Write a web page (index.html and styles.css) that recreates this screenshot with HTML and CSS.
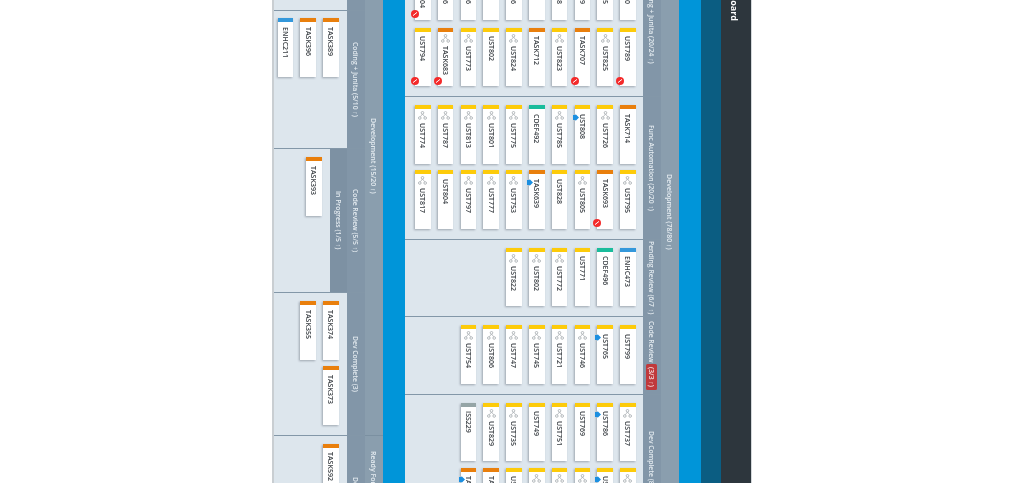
FILE: index.html
```html
<!DOCTYPE html>
<html lang="en">

<head>
    <meta charset="UTF-8">
    <title>Dashboard</title>
    <link rel="stylesheet" href="styles.css">
</head>

<body>
    <svg class="defs" width="0" height="0">
        <symbol id="share" viewBox="0 0 9 9">
            <path d="M4.5 3 2.3 5.8M4.5 3l2.2 2.8" fill="none" stroke="#a3a9ad" stroke-width=".7" />
            <circle cx="4.5" cy="1.8" r="1.3" fill="#fff" stroke="#a3a9ad" stroke-width=".8" />
            <circle cx="1.8" cy="7" r="1.3" fill="#fff" stroke="#a3a9ad" stroke-width=".8" />
            <circle cx="7.2" cy="7" r="1.3" fill="#fff" stroke="#a3a9ad" stroke-width=".8" />
        </symbol>
        <symbol id="blocked" viewBox="0 0 8 8">
            <circle cx="4" cy="4" r="4" fill="#f42a2a" />
            <path d="M2 5.6 6 2.4" stroke="#fff" stroke-width="1" />
        </symbol>
        <symbol id="pin" viewBox="0 0 6 7">
            <path d="M0 1h2.5V0L6 3.5 2.5 7V6H0z" fill="#1b8fe0" />
        </symbol>
    </svg>

    <div class="board">
        <div class="title">Dashboard</div>
        <div class="tabs"></div>

        <div class="swim">
            <div class="swim-head"></div>
            <div class="group">
                <div class="group-label">Development (78/80 ↑)</div>
                <div class="lanes">
                    <div class="lane lane-right h-76">
                        <div class="lane-label">Ready (2)</div>
                        <div class="panel"></div>
                    </div>

                    <div class="lane lane-right wide-lines">
                        <div class="lane-label">Coding + Junita (20/24 ↑)</div>
                        <div class="panel">
                            <div class="line">
                                <div class="card yellow"><svg class="share"><use href="#share" /></svg><span>UST790</span></div>
                                <div class="card yellow"><svg class="share"><use href="#share" /></svg><span>UST815</span></div>
                                <div class="card yellow"><svg class="share"><use href="#share" /></svg><span>UST819</span></div>
                                <div class="card yellow"><svg class="share"><use href="#share" /></svg><span>UST818</span></div>
                                <div class="card orange"><span>TASK710</span></div>
                                <div class="card yellow"><svg class="share"><use href="#share" /></svg><span>UST816</span></div>
                                <div class="card yellow"><span>UST812</span></div>
                                <div class="card yellow"><svg class="share"><use href="#share" /></svg><span>UST796</span></div>
                                <div class="card yellow"><svg class="share"><use href="#share" /></svg><span>UST786</span></div>
                                <div class="card orange"><svg class="share"><use href="#share" /></svg><span>TASK604</span><svg class="blocked"><use href="#blocked" /></svg></div>
                            </div>
                            <div class="line">
                                <div class="card yellow"><span>UST789</span><svg class="blocked"><use href="#blocked" /></svg></div>
                                <div class="card yellow"><svg class="share"><use href="#share" /></svg><span>UST825</span></div>
                                <div class="card orange"><span>TASK707</span><svg class="blocked"><use href="#blocked" /></svg></div>
                                <div class="card yellow"><svg class="share"><use href="#share" /></svg><span>UST823</span></div>
                                <div class="card orange"><span>TASK712</span></div>
                                <div class="card yellow"><svg class="share"><use href="#share" /></svg><span>UST824</span></div>
                                <div class="card yellow"><span>UST802</span></div>
                                <div class="card yellow"><svg class="share"><use href="#share" /></svg><span>UST773</span></div>
                                <div class="card orange"><svg class="share"><use href="#share" /></svg><span>TASK683</span><svg class="blocked"><use href="#blocked" /></svg></div>
                                <div class="card yellow"><span>UST794</span><svg class="blocked"><use href="#blocked" /></svg></div>
                            </div>
                        </div>
                    </div>

                    <div class="lane lane-right">
                        <div class="lane-label">Func Automation (20/20 ↑)</div>
                        <div class="panel">
                            <div class="line">
                                <div class="card orange"><span>TASK714</span></div>
                                <div class="card yellow"><svg class="share"><use href="#share" /></svg><span>UST726</span></div>
                                <div class="card yellow"><span>UST808</span><svg class="pin"><use href="#pin" /></svg></div>
                                <div class="card yellow"><svg class="share"><use href="#share" /></svg><span>UST785</span></div>
                                <div class="card green"><span>CDEF492</span></div>
                                <div class="card yellow"><svg class="share"><use href="#share" /></svg><span>UST775</span></div>
                                <div class="card yellow"><svg class="share"><use href="#share" /></svg><span>UST801</span></div>
                                <div class="card yellow"><svg class="share"><use href="#share" /></svg><span>UST813</span></div>
                                <div class="card yellow"><svg class="share"><use href="#share" /></svg><span>UST787</span></div>
                                <div class="card yellow"><svg class="share"><use href="#share" /></svg><span>UST774</span></div>
                            </div>
                            <div class="line">
                                <div class="card yellow"><svg class="share"><use href="#share" /></svg><span>UST795</span></div>
                                <div class="card orange"><span>TASK693</span><svg class="blocked"><use href="#blocked" /></svg></div>
                                <div class="card yellow"><svg class="share"><use href="#share" /></svg><span>UST805</span></div>
                                <div class="card yellow"><span>UST828</span></div>
                                <div class="card orange"><span>TASK639</span><svg class="pin"><use href="#pin" /></svg></div>
                                <div class="card yellow"><svg class="share"><use href="#share" /></svg><span>UST753</span></div>
                                <div class="card yellow"><svg class="share"><use href="#share" /></svg><span>UST777</span></div>
                                <div class="card yellow"><svg class="share"><use href="#share" /></svg><span>UST797</span></div>
                                <div class="card yellow"><span>UST804</span></div>
                                <div class="card yellow"><svg class="share"><use href="#share" /></svg><span>UST817</span></div>
                            </div>
                        </div>
                    </div>

                    <div class="lane lane-right">
                        <div class="lane-label">Pending Review (6/7 ↑)</div>
                        <div class="panel">
                            <div class="line">
                                <div class="card blue"><span>ENHC473</span></div>
                                <div class="card green"><span>CDEF496</span></div>
                                <div class="card yellow"><span>UST771</span></div>
                                <div class="card yellow"><svg class="share"><use href="#share" /></svg><span>UST772</span></div>
                                <div class="card yellow"><svg class="share"><use href="#share" /></svg><span>UST802</span></div>
                                <div class="card yellow"><svg class="share"><use href="#share" /></svg><span>UST822</span></div>
                            </div>
                        </div>
                    </div>

                    <div class="lane lane-right">
                        <div class="lane-label">Code Review <span class="over-limit">(3/3 ↑)</span></div>
                        <div class="panel">
                            <div class="line">
                                <div class="card yellow"><span>UST799</span></div>
                                <div class="card yellow"><span>UST765</span><svg class="pin"><use href="#pin" /></svg></div>
                                <div class="card yellow"><svg class="share"><use href="#share" /></svg><span>UST746</span></div>
                                <div class="card yellow"><svg class="share"><use href="#share" /></svg><span>UST721</span></div>
                                <div class="card yellow"><svg class="share"><use href="#share" /></svg><span>UST745</span></div>
                                <div class="card yellow"><svg class="share"><use href="#share" /></svg><span>UST747</span></div>
                                <div class="card yellow"><svg class="share"><use href="#share" /></svg><span>UST806</span></div>
                                <div class="card yellow"><svg class="share"><use href="#share" /></svg><span>UST754</span></div>
                            </div>
                        </div>
                    </div>

                    <div class="lane lane-right">
                        <div class="lane-label">Dev Complete (8/9 ↑)</div>
                        <div class="panel">
                            <div class="line">
                                <div class="card yellow"><svg class="share"><use href="#share" /></svg><span>UST737</span></div>
                                <div class="card yellow"><span>UST786</span><svg class="pin"><use href="#pin" /></svg></div>
                                <div class="card yellow"><span>UST769</span></div>
                                <div class="card yellow"><svg class="share"><use href="#share" /></svg><span>UST751</span></div>
                                <div class="card yellow"><span>UST749</span></div>
                                <div class="card yellow"><svg class="share"><use href="#share" /></svg><span>UST735</span></div>
                                <div class="card yellow"><svg class="share"><use href="#share" /></svg><span>UST829</span></div>
                                <div class="card gray"><span>ISS229</span></div>
                            </div>
                            <div class="line">
                                <div class="card yellow"><svg class="share"><use href="#share" /></svg><span>UST744</span></div>
                                <div class="card yellow"><span>UST763</span><svg class="pin"><use href="#pin" /></svg></div>
                                <div class="card yellow"><svg class="share"><use href="#share" /></svg><span>UST742</span></div>
                                <div class="card yellow"><svg class="share"><use href="#share" /></svg><span>UST741</span></div>
                                <div class="card yellow"><svg class="share"><use href="#share" /></svg><span>UST739</span></div>
                                <div class="card yellow"><span>UST731</span></div>
                                <div class="card orange"><span>TASK648</span></div>
                                <div class="card orange"><span>TASK651</span><svg class="pin"><use href="#pin" /></svg></div>
                            </div>
                        </div>
                    </div>
                </div>
            </div>
        </div>

        <div class="swim swim-left">
            <div class="swim-head"></div>
            <div class="lanes">
                <div class="group">
                    <div class="group-label">Development (15/20 ↑)</div>
                    <div class="lanes">
                        <div class="lane lane-left h-134">
                            <div class="lane-label">Ready (0)</div>
                            <div class="panel"></div>
                        </div>

                        <div class="lane lane-left h-138">
                            <div class="lane-label">Coding + Junita (5/10 ↑)</div>
                            <div class="panel tight">
                                <div class="line">
                                    <div class="card orange"><span>TASK389</span></div>
                                    <div class="card orange"><span>TASK396</span></div>
                                    <div class="card blue"><span>ENHC211</span></div>
                                </div>
                            </div>
                        </div>

                        <div class="lane lane-left h-144">
                            <div class="lane-label">Code Review (5/5 ↑)</div>
                            <div class="lane-label in-progress">In Progress (1/5 ↑)</div>
                            <div class="panel">
                                <div class="line">
                                    <div class="card orange"><span>TASK393</span></div>
                                </div>
                            </div>
                        </div>

                        <div class="lane lane-left">
                            <div class="lane-label">Dev Complete (3)</div>
                            <div class="panel">
                                <div class="line">
                                    <div class="card orange"><span>TASK374</span></div>
                                    <div class="card orange"><span>TASK355</span></div>
                                </div>
                                <div class="line">
                                    <div class="card orange"><span>TASK373</span></div>
                                </div>
                            </div>
                        </div>
                    </div>
                </div>

                <div class="group">
                    <div class="group-label">Ready For Merge (2/4 ↑)</div>
                    <div class="lanes">
                        <div class="lane lane-left h-112">
                            <div class="lane-label">Done (2)</div>
                            <div class="panel">
                                <div class="line">
                                    <div class="card orange"><span>TASK592</span></div>
                                </div>
                            </div>
                        </div>
                    </div>
                </div>
            </div>
        </div>
    </div>
</body>

</html>
```

FILE: styles.css
```css
* {
    box-sizing: border-box;
}

html,
body {
    height: 100%;
    margin: 0;
}

body {
    display: flex;
    justify-content: center;
    align-items: flex-start;
    overflow: hidden;
    background: white;
    font-family: 'Open Sans', sans-serif;
}

.defs {
    position: absolute;
}

/* the whole board reads top to bottom, blocks stack right to left */
.board {
    writing-mode: vertical-rl;
    text-orientation: sideways;
    display: flex;
    flex-direction: column;
    width: 480px;
    margin-top: -123px;
    border-right: 1px solid #d4d8db;
    border-left: 2px solid #c9ced2;
    background: #dde6ed;
    filter: blur(0.7px);
}

.title {
    width: 30px;
    padding-top: 95px;
    line-height: 34px;
    background: #2d363d;
    color: white;
    font-size: 9px;
    font-weight: 700;
}

.tabs {
    width: 20px;
    background: #0b5d82;
}

.swim {
    display: flex;
    flex-direction: column;
}

.swim-left {
    flex-grow: 1;
}

.swim-head {
    width: 22.5px;
    background: #0095d9;
}

.group {
    display: flex;
    flex-direction: column;
}

.group-label {
    display: flex;
    justify-content: center;
    align-items: center;
    width: 18px;
    border-bottom: 1px solid #7b90a1;
    background: #8a9eae;
    color: #e4ebf0;
    font-size: 7px;
    font-weight: 600;
}

.lanes {
    display: flex;
    flex-direction: row;
}

.swim-left .lanes,
.swim-left .group {
    flex-grow: 1;
}

.lane {
    display: flex;
    flex-direction: column;
    flex-shrink: 0;
    border-bottom: 1px solid #8397a8;
}

.lane-label {
    display: flex;
    flex-shrink: 0;
    justify-content: center;
    align-items: center;
    width: 17.5px;
    background: #8296a8;
    color: #e4ebf0;
    font-size: 6.8px;
    font-weight: 600;
    white-space: pre;
}

.in-progress {
    width: 17px;
    background: #7d91a3;
}

.over-limit {
    padding: 3px 1px;
    border-radius: 1.5px;
    background: #c0393b;
    color: #f5dede;
}

.panel {
    display: flex;
    flex-direction: row;
    flex-grow: 1;
    gap: 6.5px;
    padding: 8px 7.3px 10px 0;
    background: #dde6ed;
}

.wide-lines .panel {
    gap: 8px;
}

.tight {
    padding-top: 7px;
}

.lane-left .panel {
    padding-right: 8.3px;
}

.lane-right .panel {
    width: 238px;
}

.h-76 {
    height: 76px;
}

.h-112 {
    height: 112px;
}

.h-134 {
    height: 134px;
}

.h-138 {
    height: 138px;
}

.h-144 {
    height: 144px;
}

.line {
    display: flex;
    flex-direction: column;
    flex-shrink: 0;
    gap: 7.3px;
}

.card {
    position: relative;
    display: flex;
    flex-direction: row;
    align-items: center;
    flex-shrink: 0;
    width: 15.5px;
    height: 58.5px;
    padding-top: 4.5px;
    border-top: 4px solid;
    background: white;
    box-shadow: -1px 1px 2px rgba(40, 50, 60, 0.35);
    color: #3a3f44;
    font-size: 7px;
    font-weight: 600;
    white-space: nowrap;
}

.yellow {
    border-color: #fdcb0a;
}

.orange {
    border-color: #e97f0c;
}

.green {
    border-color: #1abc9c;
}

.blue {
    border-color: #3498db;
}

.gray {
    border-color: #95a5a6;
}

.share {
    flex-shrink: 0;
    width: 9px;
    height: 9px;
    margin-top: -2.5px;
    margin-bottom: 3px;
}

.blocked {
    position: absolute;
    top: 45px;
    left: -4px;
    width: 8px;
    height: 8px;
}

.pin {
    position: absolute;
    top: 4.5px;
    left: -2px;
    width: 6px;
    height: 7px;
}
```
